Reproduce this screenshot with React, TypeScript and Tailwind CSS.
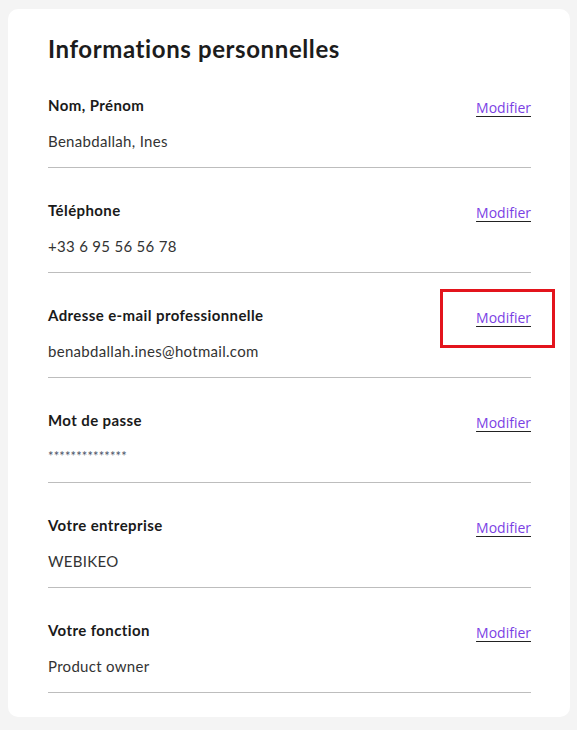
import React from "react";

const rows: { label: string; value: string; pw?: boolean }[] = [
  { label: "Nom, Prénom", value: "Benabdallah, Ines" },
  { label: "Téléphone", value: "+33 6 95 56 56 78" },
  { label: "Adresse e-mail professionnelle", value: "benabdallah.ines@hotmail.com" },
  { label: "Mot de passe", value: "**************", pw: true },
  { label: "Votre entreprise", value: "WEBIKEO" },
  { label: "Votre fonction", value: "Product owner" },
];

export default function App() {
  return (
    <div className="w-[577px] h-[730px] bg-[#f4f4f4] pt-[9px] px-[8px] relative overflow-hidden">
      <div className="w-[562px] bg-white rounded-[10px] pt-[24px] pb-[24px] pl-[40px] pr-[39px]">
        <h1 className="text-[24px] leading-[32px] font-bold text-[#1c1c1c] tracking-[0.6px]" style={{ fontFamily: "'Lato', 'Open Sans', sans-serif" }}>
          Informations personnelles
        </h1>
        <div className="mt-[30px] flex flex-col">
          {rows.map((r, i) => (
            <div
              key={r.label}
              className={`flex justify-between items-start border-b border-[#bdbdbd] pb-[16px] ${i === 0 ? "" : "pt-[32px]"}`}
            >
              <div className="flex flex-col" style={{ fontFamily: "'Lato', 'Open Sans', sans-serif" }}>
                <div className="text-[15px] leading-[20px] font-bold text-[#1a1a1a] tracking-[0.4px]">{r.label}</div>
                {r.pw ? (
                  <div className="mt-[16px] text-[13px] leading-[20px] text-[#4a5568] tracking-[0.1px]">{r.value}</div>
                ) : (
                  <div className="mt-[16px] text-[15px] leading-[20px] text-[#333333] tracking-[0.3px]">{r.value}</div>
                )}
              </div>
              <a
                href="#"
                className="mt-[3px] text-[14px] leading-[20px] text-[#7b3fe4] underline decoration-[#222] underline-offset-[3px]"
                style={{ fontFamily: "'Open Sans', 'Noto Sans', sans-serif" }}
              >
                Modifier
              </a>
            </div>
          ))}
        </div>
      </div>
      <div className="absolute left-[440px] top-[289px] w-[115px] h-[59px] border-[3px] border-[#e3141c]" />
    </div>
  );
}
